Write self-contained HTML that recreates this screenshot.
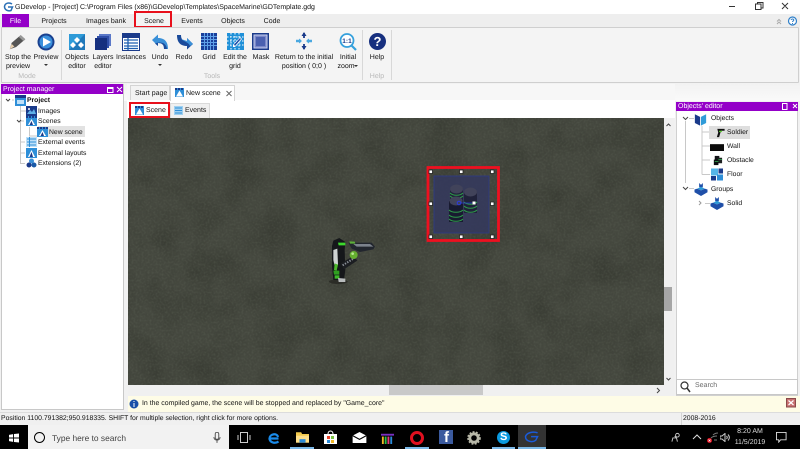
<!DOCTYPE html>
<html style="background:#f1f1f1"><head><meta charset="utf-8">
<style>
html,body{margin:0;padding:0;width:800px;height:449px;overflow:hidden;background:#f1f1f1;font-family:"Liberation Sans",sans-serif;font-size:7px;color:#111;text-rendering:geometricPrecision}
body{filter:blur(.25px)}
div,span,svg{position:absolute;box-sizing:border-box}
.t{white-space:nowrap;line-height:10px}
.c{text-align:center;transform:translateX(-50%);line-height:9px;white-space:nowrap;color:#111;font-size:7px}
.tree{font-size:6.8px;line-height:10px;white-space:nowrap;color:#111}
</style></head>
<body>
<!-- title bar -->
<div style="left:0;top:0;width:800px;height:14px;background:#fff"></div>
<svg style="left:3px;top:2px" width="11" height="10" viewBox="0 0 11 10"><path d="M9 2C6 0 2 1 1.500 4.500C1.500 8 5 9.500 8 8.500L9.500 5H5" fill="none" stroke="#2a6fb5" stroke-width="1.500"/></svg>
<div class="t" style="left:15px;top:3px;font-size:7px;color:#111">GDevelop - [Project] C:\Program Files (x86)\GDevelop\Templates\SpaceMarine\GDTemplate.gdg</div>
<svg style="left:725px;top:0" width="75" height="14" viewBox="0 0 75 14"><path d="M4 6.500H10M30.500 4H36V9.500H30.500ZM32.500 4V2.500H38V8H36M57 3L63 9M63 3L57 9" fill="none" stroke="#333" stroke-width="1"/></svg>
<!-- tabs row -->
<div style="left:0;top:14px;width:800px;height:14px;background:#eeeeee"></div>
<div style="left:2px;top:14px;width:27px;height:14px;background:#9400c8;color:#fff;text-align:center;line-height:15px;font-size:7px">File</div>
<div class="c" style="left:54px;top:17px">Projects</div>
<div class="c" style="left:106px;top:17px">Images bank</div>
<div style="left:134px;top:11px;width:38px;height:17px;border:2px solid #e8101c;background:#f4f4f4"></div>
<div class="c" style="left:154px;top:17px">Scene</div>
<div class="c" style="left:192px;top:17px">Events</div>
<div class="c" style="left:233px;top:17px">Objects</div>
<div class="c" style="left:272px;top:17px">Code</div>
<svg style="left:776px;top:15px" width="22" height="12" viewBox="0 0 22 12"><path d="M1 6.500L3 4.500L5 6.500M1 9L3 7L5 9" fill="none" stroke="#aaa"/><circle cx="16.500" cy="6" r="4" fill="#fff" stroke="#2f7fc8" stroke-width="1.200"/><path d="M15 5C15.500 3.500 18 3.800 17.800 5.300C17.600 6 16.500 6 16.500 7M16.500 8V9" fill="none" stroke="#2f7fc8"/></svg>
<!-- ribbon -->
<div style="left:1px;top:27px;width:798px;height:56px;background:#f4f4f4;border:1px solid #cfcfcf;border-radius:1px"></div>
<div style="left:61px;top:30px;width:1px;height:50px;background:#d8d8d8"></div>
<div style="left:362px;top:30px;width:1px;height:50px;background:#d8d8d8"></div>
<div style="left:391px;top:30px;width:1px;height:50px;background:#d8d8d8"></div>

<!-- ribbon icons -->
<svg style="left:8px;top:33px" width="20" height="18" viewBox="0 0 22 18"><path d="M2 17L4 10L14 1.500L19 6L9 14.500Z" fill="#555"/><path d="M14 1.500L19 6L17 8L12 3.500Z" fill="#999"/><path d="M2 17L4 11L7 14Z" fill="#e8d0b0"/></svg>
<svg style="left:36px;top:33px" width="20" height="18" viewBox="0 0 20 18"><circle cx="10" cy="9" r="8.500" fill="#19408f"/><circle cx="10" cy="9" r="6.500" fill="#3a90dc"/><path d="M7 4.500L15 9L7 13.500Z" fill="#fff"/></svg>
<svg style="left:68px;top:33px" width="18" height="18" viewBox="0 0 18 18"><rect x="1" y="1" width="16" height="16" fill="#2f9bd8"/><path d="M17 1V17H1Z" fill="#1f78ba"/><path d="M9 4L12 7L9 10L6 7ZM5 9L8 12L5 15L2 12ZM13 9L16 12L13 15L10 12Z" fill="#fff"/></svg>
<svg style="left:94px;top:33px" width="18" height="18" viewBox="0 0 18 18"><rect x="5" y="1" width="12" height="12" fill="#5b78c8"/><rect x="3" y="3" width="12" height="12" fill="#2f4ea8"/><rect x="1" y="5" width="12" height="12" fill="#16307f"/></svg>
<svg style="left:122px;top:33px" width="18" height="18" viewBox="0 0 18 18"><rect x=".5" y=".5" width="17" height="17" fill="#fff" stroke="#1a3a8a"/><rect x="1" y="1" width="16" height="4" fill="#1a3a8a"/><path d="M2 7H16M2 10H16M2 13H16M2 15.500H16M6 5V17" stroke="#1f5fb0" stroke-width="1.300" fill="none"/></svg>
<svg style="left:151px;top:33px" width="18" height="18" viewBox="0 0 18 18"><path d="M1 7L7 1.500V5C13 5 17 8 17 16H13C13 11.500 11 10 7 10V13Z" fill="#3a90d8"/><path d="M13 16C13 11.500 11 10 7 10V13L4 10.500C9 8.500 15 9 16 16Z" fill="#1a4a9a"/></svg>
<svg style="left:176px;top:33px" width="18" height="18" viewBox="0 0 18 18"><path d="M17 11L11 16.500V13C5 13 1 10 1 2H5C5 6.500 7 8 11 8V5Z" fill="#1a4a9a"/><path d="M11 8V5L17 11L14 13C13 9.500 8 8.500 5 6Z" fill="#3a90d8"/></svg>
<svg style="left:201px;top:33px" width="16" height="17" viewBox="0 0 16 17"><rect width="16" height="17" fill="#1a3f9a"/><path d="M3.500 0V17M6.500 0V17M9.500 0V17M12.500 0V17M0 3.500H16M0 6.500H16M0 9.500H16M0 12.500H16" stroke="#5fa0e8" stroke-width="1"/></svg>
<svg style="left:227px;top:33px" width="17" height="17" viewBox="0 0 17 17"><rect width="17" height="17" fill="#1f90d8"/><path d="M0 4H17M0 8H17M0 12H17M4 0V17M8 0V17M12 0V17" stroke="#fff" stroke-dasharray="1.500 1.500"/><path d="M6 12L13 4L15 6L8 14H6Z" fill="#fff"/><path d="M7 11.500L13 5L14 6L8 13Z" fill="#1f4fa8"/></svg>
<svg style="left:252px;top:33px" width="17" height="17" viewBox="0 0 17 17"><rect width="17" height="17" fill="#1a3a8a"/><rect x="2" y="2" width="13" height="13" fill="#7a88c8" stroke="#c8d0f0"/><rect x="4" y="4" width="9" height="9" fill="#4a60b0"/></svg>
<svg style="left:295px;top:32px" width="18" height="18" viewBox="0 0 18 18"><path d="M9 1V6M9 12V17" stroke="#1a3a8a" stroke-width="1.800"/><path d="M9 0L11.500 4H6.500ZM9 18L11.500 14H6.500Z" fill="#1a3a8a"/><path d="M1 9H6M12 9H17" stroke="#4aa8e0" stroke-width="2.500"/><path d="M7 9L4 6.500V11.500ZM11 9L14 6.500V11.500Z" fill="#4aa8e0"/></svg>
<svg style="left:339px;top:33px" width="18" height="18" viewBox="0 0 18 18"><circle cx="8" cy="7.500" r="6.500" fill="#fff" stroke="#35a0dc" stroke-width="1.800"/><path d="M12.500 12.500L17 17" stroke="#35a0dc" stroke-width="2.200"/><text x="8" y="10" font-size="6.500" font-weight="bold" text-anchor="middle" fill="#1a3a8a" font-family="Liberation Sans">1:1</text></svg>
<svg style="left:369px;top:33px" width="17" height="17" viewBox="0 0 17 17"><circle cx="8.500" cy="8.500" r="8.500" fill="#17307f"/><text x="8.500" y="13" font-size="13" font-weight="bold" text-anchor="middle" fill="#fff" font-family="Liberation Sans">?</text></svg>

<!-- ribbon labels -->
<div class="c" style="left:18px;top:53px">Stop the</div><div class="c" style="left:18px;top:62px">preview</div>
<div class="c" style="left:46px;top:53px">Preview</div>
<div style="left:44px;top:64px;border:2px solid transparent;border-top:2px solid #333"></div>
<div class="c" style="left:77px;top:53px">Objects</div><div class="c" style="left:77px;top:62px">editor</div>
<div class="c" style="left:103px;top:53px">Layers</div><div class="c" style="left:103px;top:62px">editor</div>
<div class="c" style="left:131px;top:53px">Instances</div>
<div class="c" style="left:160px;top:53px">Undo</div>
<div style="left:158px;top:64px;border:2px solid transparent;border-top:2px solid #333"></div>
<div class="c" style="left:184px;top:53px">Redo</div>
<div class="c" style="left:209px;top:53px">Grid</div>
<div class="c" style="left:235px;top:53px">Edit the</div><div class="c" style="left:235px;top:62px">grid</div>
<div class="c" style="left:261px;top:53px">Mask</div>
<div class="c" style="left:304px;top:53px">Return to the initial</div><div class="c" style="left:304px;top:62px">position ( 0;0 )</div>
<div class="c" style="left:348px;top:53px">Initial</div><div class="c" style="left:346px;top:62px">zoom</div>
<div style="left:354px;top:65px;border:2px solid transparent;border-top:2px solid #333"></div>
<div class="c" style="left:377px;top:53px">Help</div>
<div class="c" style="left:27px;top:72px;color:#b8b8b8">Mode</div>
<div class="c" style="left:212px;top:72px;color:#b8b8b8">Tools</div>
<div class="c" style="left:377px;top:72px;color:#b8b8b8">Help</div>

<!-- band under ribbon -->
<div style="left:0;top:83px;width:800px;height:18px;background:linear-gradient(#f2f2f2,#fafafa)"></div>
<div style="left:127px;top:100px;width:548px;height:18px;background:#fff"></div>

<!-- Project manager -->
<div style="left:1px;top:84px;width:123px;height:326px;background:#fff;border:1px solid #c8c8c8"></div>
<div style="left:1px;top:84px;width:122px;height:10px;background:#9400c8"></div>
<div class="t" style="left:3px;top:85px;color:#fff;font-size:7px;line-height:10px">Project manager</div>
<svg style="left:105px;top:85px" width="18" height="9" viewBox="0 0 18 9"><path d="M2.500 2.500H8V7.500H2.500ZM2.500 3.500H8M12 2L17 7M17 2L12 7" fill="none" stroke="#fff"/></svg>
<!-- tree lines -->
<svg style="left:0;top:94px" width="124" height="80" viewBox="0 0 124 80"><path d="M12 6H14M20.500 12V70M20.500 17H26M20.500 27H24M29.500 33V42H37M20.500 48H25M20.500 59H25M20.500 69.500H25" fill="none" stroke="#c8c8c8" stroke-width="1"/><path d="M6 5L8 7L10 5M17 26L19 28L21 26" fill="none" stroke="#444"/></svg>
<div style="left:38px;top:126px;width:47px;height:11px;background:#e2e2e2"></div>
<svg style="left:14px;top:95px" width="13" height="11" viewBox="0 0 13 11"><rect x="1" y="0" width="11" height="11" fill="#2f8fd8"/><rect x="1" y="0" width="11" height="3" fill="#1a3a8a"/><rect x="3" y="5" width="7" height="4" fill="#bfe0f8"/></svg>
<svg style="left:26px;top:106px" width="11" height="10" viewBox="0 0 11 10"><rect width="11" height="10" fill="#1a3a8a"/><path d="M1 8L4 4L6 6L8 3L10 8Z" fill="#5fb0e8"/><circle cx="3" cy="3" r="1" fill="#fff"/></svg>
<svg style="left:26px;top:116px" width="11" height="10" viewBox="0 0 11 10"><rect width="11" height="10" fill="#2f8fd8"/><path d="M0 1H11" stroke="#1a3a8a" stroke-width="2" stroke-dasharray="2 1"/><path d="M5.500 3L9 9H2Z" fill="#fff"/><path d="M5.500 5L7 9H3.500Z" fill="#1a3a8a"/></svg>
<svg style="left:37px;top:127px" width="11" height="10" viewBox="0 0 11 10"><rect width="11" height="10" fill="#2f8fd8"/><path d="M0 1H11" stroke="#1a3a8a" stroke-width="2" stroke-dasharray="2 1"/><path d="M5.500 3L9 9H2Z" fill="#fff"/><path d="M5.500 5L7 9H3.500Z" fill="#1a3a8a"/></svg>
<svg style="left:26px;top:137px" width="11" height="10" viewBox="0 0 11 10"><rect width="11" height="10" fill="#bfe0f8"/><path d="M1 2H10M1 5H10M1 8H10M3.500 0V10" stroke="#2f8fd8"/></svg>
<svg style="left:26px;top:148px" width="11" height="10" viewBox="0 0 11 10"><rect width="11" height="10" fill="#2f8fd8"/><path d="M5.500 2L9 9H2Z" fill="#fff"/><path d="M5.500 4L7 9H3.500Z" fill="#1a3a8a"/></svg>
<svg style="left:26px;top:158px" width="11" height="10" viewBox="0 0 11 10"><circle cx="5.500" cy="3" r="2.500" fill="#3a90d8"/><circle cx="3" cy="7" r="2.500" fill="#1a3a8a"/><circle cx="8" cy="7" r="2.500" fill="#1a5aa8"/></svg>
<div class="tree" style="left:27px;top:96px;font-weight:bold">Project</div>
<div class="tree" style="left:38px;top:107px">Images</div>
<div class="tree" style="left:38px;top:117px">Scenes</div>
<div class="tree" style="left:49px;top:128px">New scene</div>
<div class="tree" style="left:38px;top:138px">External events</div>
<div class="tree" style="left:38px;top:149px">External layouts</div>
<div class="tree" style="left:38px;top:159px">Extensions (2)</div>

<!-- scene tabs -->
<div style="left:127px;top:84px;width:548px;height:16px;background:#f7f7f7"></div>
<div style="left:130px;top:85px;width:40px;height:15px;background:#f3f3f3;border:1px solid #d4d4d4;border-bottom:0"></div>
<div class="t" style="left:135px;top:89px;font-size:7px">Start page</div>
<div style="left:170px;top:85px;width:65px;height:16px;background:#fff;border:1px solid #d4d4d4;border-bottom:0"></div>
<svg style="left:175px;top:88px" width="9" height="9" viewBox="0 0 9 9"><rect width="9" height="9" fill="#2f8fd8"/><path d="M0 1H9" stroke="#1a3a8a" stroke-width="2" stroke-dasharray="2 1"/><path d="M4.500 2.500L8 8.500H1Z" fill="#fff"/></svg>
<div class="t" style="left:186px;top:89px;font-size:7px">New scene</div>
<svg style="left:225px;top:90px" width="8" height="7" viewBox="0 0 8 7"><path d="M1.500 1L6.500 6M6.500 1L1.500 6" stroke="#666" fill="none"/></svg>

<div style="left:170px;top:103px;width:40px;height:15px;background:#f0f0f0;border:1px solid #dadada;border-bottom:0"></div>
<svg style="left:174px;top:106px" width="9" height="9" viewBox="0 0 9 9"><rect width="9" height="9" fill="#9fd0f0"/><path d="M1 2H8M1 4.500H8M1 7H8" stroke="#2f8fd8"/></svg>
<div class="t" style="left:185px;top:106px;font-size:7px">Events</div>
<div style="left:129px;top:102px;width:41px;height:16px;background:#fff;border:2px solid #e8101c"></div>
<svg style="left:135px;top:106px" width="9" height="9" viewBox="0 0 9 9"><rect width="9" height="9" fill="#2f8fd8"/><path d="M0 1H9" stroke="#1a3a8a" stroke-width="2" stroke-dasharray="2 1"/><path d="M4.500 2.500L8 8.500H1Z" fill="#fff"/></svg>
<div class="t" style="left:146px;top:106px;font-size:7px">Scene</div>

<!-- canvas -->
<svg style="left:128px;top:118px" width="536" height="267" viewBox="0 0 536 267">
<defs>
<filter id="n" x="0" y="0" width="100%" height="100%" color-interpolation-filters="sRGB"><feTurbulence type="fractalNoise" baseFrequency="0.03" numOctaves="4" seed="4"/><feColorMatrix type="matrix" values="0 0 0 0 0.18  0 0 0 0 0.19  0 0 0 0 0.16  2 0 0 0 -0.75"/></filter>
<filter id="m" x="0" y="0" width="100%" height="100%" color-interpolation-filters="sRGB"><feTurbulence type="fractalNoise" baseFrequency="0.5" numOctaves="2" seed="8"/><feColorMatrix type="matrix" values="0 0 0 0 0.42  0 0 0 0 0.45  0 0 0 0 0.39  1.4 0 0 0 -0.55"/></filter>
</defs>
<rect width="536" height="267" fill="#44473e"/>
<rect width="536" height="267" filter="url(#n)" opacity=".45"/>
<rect width="536" height="267" filter="url(#m)" opacity=".4"/>
</svg>

<!-- soldier -->
<svg style="left:320px;top:230px" width="60" height="60" viewBox="0 0 180 180">
<ellipse cx="55" cy="155" rx="28" ry="7" fill="#23241f" opacity=".7"/>
<path d="M36 48L40 32L58 24L76 36L74 60L76 120L72 150L40 150L36 110Z" fill="#15171a"/>
<path d="M40 60L52 56L54 104L44 108L40 90Z" fill="#cfd3d3"/>
<path d="M54 38H76V46H56Z" fill="#3cd92c"/>
<path d="M44 100L54 104L50 122L42 120Z" fill="#4cb82c"/>
<path d="M85 38L155 38L165 50L160 58L120 66L95 56Z" fill="#22262e"/>
<path d="M100 42H150L160 50L110 50Z" fill="#7c828c"/>
<path d="M88 34L104 35L106 41L90 41Z" fill="#5cb038"/>
<path d="M62 100L100 78L112 92L72 118Z" fill="#1c1e22"/>
<path d="M68 106L100 86" stroke="#8a9098" stroke-width="6" stroke-dasharray="4 4"/>
<circle cx="101" cy="75" r="12" fill="#66b030"/><circle cx="98" cy="71" r="4" fill="#b8e890"/>
<path d="M40 122H58V134H42Z" fill="#2f9f20"/>
<path d="M44 136H58V146H44Z" fill="#3cba28"/>
<path d="M54 144L76 146L76 156L56 156Z" fill="#b8bcbc"/>
</svg>

<!-- barrels -->
<div style="left:434px;top:176px;width:55px;height:57px;background:#34385e;opacity:.85"></div>
<svg style="left:420px;top:160px" width="85" height="85" viewBox="0 0 85 85">
<rect x="14" y="16" width="55" height="57" fill="none" stroke="#2f3a88" stroke-width=".8"/>
<rect x="30" y="28" width="13" height="20" fill="#20223a"/><ellipse cx="36.500" cy="29" rx="6.500" ry="4.500" fill="#41435a"/>
<path d="M30 33C33 36 40 36 43 33M30 36C33 39 40 39 43 36" stroke="#2e9a4a" fill="none" stroke-width="1.100"/>
<rect x="44" y="31" width="13" height="22" fill="#20223a"/><ellipse cx="50.500" cy="32" rx="6.500" ry="4.500" fill="#41435a"/>
<path d="M44 42C47 45 54 45 57 42M44 46C47 49 54 49 57 46M44 50C47 53 54 53 57 50" stroke="#2e9a4a" fill="none" stroke-width="1.100"/>
<rect x="29" y="41" width="14" height="21" fill="#181a30"/><ellipse cx="36" cy="41" rx="6.500" ry="4.500" fill="#41435a"/>
<path d="M29 50C32 53 40 53 43 50M29 55C32 58 40 58 43 55M29 59C32 62 40 62 43 59" stroke="#2e9a4a" fill="none" stroke-width="1.100"/>
<circle cx="39" cy="43" r="1.800" fill="none" stroke="#2a3ae0"/>
<rect x="52.500" y="41.500" width="3" height="3" fill="#fff"/>
<path d="M41 43H52" stroke="#2a3ae0" stroke-width=".7"/>
<rect x="8" y="7.500" width="70.500" height="73" fill="none" stroke="#ee1020" stroke-width="2.800"/>
<g fill="#fff" stroke="#222" stroke-width=".8">
<rect x="9" y="10" width="3.500" height="3.500"/><rect x="39.500" y="10" width="3.500" height="3.500"/><rect x="70.500" y="10" width="3.500" height="3.500"/>
<rect x="9" y="42" width="3.500" height="3.500"/><rect x="70.500" y="42" width="3.500" height="3.500"/>
<rect x="9" y="75" width="3.500" height="3.500"/><rect x="39.500" y="75" width="3.500" height="3.500"/><rect x="70.500" y="75" width="3.500" height="3.500"/>
</g></svg>

<!-- scrollbars -->
<div style="left:664px;top:118px;width:10px;height:278px;background:#f0f0f0"></div>
<div style="left:664px;top:287px;width:8px;height:24px;background:#a6a6a6"></div>
<svg style="left:664px;top:120px" width="10" height="270" viewBox="0 0 10 270"><path d="M2.500 6L4.500 4L6.500 6M2.500 258L4.500 260L6.500 258" stroke="#444" fill="none"/></svg>
<div style="left:128px;top:385px;width:536px;height:11px;background:#f0f0f0"></div>
<div style="left:389px;top:385px;width:94px;height:10px;background:#c9c9c9"></div>
<svg style="left:654px;top:386px" width="9" height="9" viewBox="0 0 9 9"><path d="M3 2L5.500 4.500L3 7" stroke="#444" fill="none"/></svg>

<!-- Objects editor -->
<div style="left:676px;top:102px;width:122px;height:294px;background:#fff;border:1px solid #d0d0d0"></div>
<div style="left:676px;top:102px;width:122px;height:9px;background:#9400c8"></div>
<div class="t" style="left:678px;top:102px;color:#fff;font-size:7px;line-height:10px">Objects' editor</div>
<svg style="left:780px;top:102px" width="18" height="9" viewBox="0 0 18 9"><path d="M2.500 1.500H7V7.500H2.500ZM13 2L17 6M17 2L13 6" fill="none" stroke="#fff"/></svg>
<svg style="left:680px;top:112px" width="60" height="110" viewBox="0 0 60 110"><path d="M5.500 9V71M9 6.500H14M22 14V62.500M22 20H30M22 34H30M22 48H30M22 62.500H30M9 76.500H14M25 91.500H30" stroke="#c8c8c8" fill="none"/><path d="M3 5L5.500 7.500L8 5M3 75L5.500 77.500L8 75" stroke="#444" fill="none"/><path d="M19 89L21 91L19 93" stroke="#999" fill="none"/></svg>
<div style="left:709px;top:126px;width:41px;height:13px;background:#dedede"></div>
<svg style="left:694px;top:113px" width="13" height="13" viewBox="0 0 15 14"><path d="M1 1L7 4V14L1 11Z" fill="#1a3a8a"/><path d="M14 1L8 4V14L14 11Z" fill="#2f9bd8"/></svg>
<svg style="left:715px;top:128px" width="11" height="10" viewBox="0 0 11 11"><path d="M2 1H10V3H6L4 10H1.500L3 5Z" fill="#111"/><path d="M4 3H7V4.500H4Z" fill="#5ad030"/></svg>
<div style="left:710px;top:144px;width:14px;height:7px;background:#0c0c0c;border-top:1px solid #333"></div>
<svg style="left:712px;top:155px" width="11" height="11" viewBox="0 0 12 12"><rect x="3" y="1" width="5" height="6" fill="#121418"/><rect x="6" y="3" width="5" height="6" fill="#1c2020"/><rect x="2" y="5" width="5" height="6" fill="#0c0e10"/><path d="M3 7H7M7 5H11" stroke="#2e9a4a"/></svg>
<svg style="left:711px;top:168px" width="12" height="13" viewBox="0 0 12 12"><rect width="7" height="7" fill="#55b5e8"/><rect x="7.500" y="0" width="4.500" height="5" fill="#1a3a8a"/><rect x="0" y="7.500" width="5" height="4.500" fill="#1a3a8a"/><rect x="6" y="6" width="6" height="6" fill="#2f8fd8"/></svg>
<svg style="left:694px;top:183px" width="14" height="13" viewBox="0 0 14 14"><path d="M7 2L9 0V4L7 6L5 4V0ZM3 6L7 8V14L0 10V7ZM11 6L7 8V14L14 10V7Z" fill="#1f4fa8"/><path d="M3 6L7 8L11 6L7 4Z" fill="#2f9bd8"/></svg>
<svg style="left:710px;top:197px" width="14" height="13" viewBox="0 0 14 14"><path d="M7 2L9 0V4L7 6L5 4V0ZM3 6L7 8V14L0 10V7ZM11 6L7 8V14L14 10V7Z" fill="#1f4fa8"/><path d="M3 6L7 8L11 6L7 4Z" fill="#2f9bd8"/></svg>
<div class="tree" style="left:711px;top:114px">Objects</div>
<div class="tree" style="left:727px;top:128px">Soldier</div>
<div class="tree" style="left:727px;top:142px">Wall</div>
<div class="tree" style="left:727px;top:156px">Obstacle</div>
<div class="tree" style="left:727px;top:170px">Floor</div>
<div class="tree" style="left:711px;top:185px">Groups</div>
<div class="tree" style="left:727px;top:199px">Solid</div>
<!-- search -->
<div style="left:676px;top:379px;width:122px;height:16px;background:#fff;border:1px solid #c8c8c8"></div>
<svg style="left:680px;top:381px" width="11" height="12" viewBox="0 0 11 12"><circle cx="4.500" cy="4.500" r="3.500" fill="none" stroke="#333" stroke-width="1.200"/><path d="M7 7L10 11" stroke="#333" stroke-width="1.500"/></svg>
<div class="t" style="left:695px;top:381px;font-size:7px;color:#666">Search</div>

<!-- info bar -->
<div style="left:128px;top:396px;width:672px;height:16px;background:#fefce6"></div>
<svg style="left:129px;top:399px" width="10" height="10" viewBox="0 0 10 10"><circle cx="5" cy="5" r="4.500" fill="#1a50a8"/><path d="M5 2V3M5 4V8" stroke="#fff"/></svg>
<div class="t" style="left:142px;top:399px;font-size:6.950px;color:#111">In the compiled game, the scene will be stopped and replaced by "Game_core"</div>
<svg style="left:786px;top:398px" width="11" height="10" viewBox="0 0 11 10"><rect x=".5" y=".5" width="9" height="8.500" fill="#c87070" stroke="#8a4a4a"/><path d="M2.500 2.500L7.500 7M7.500 2.500L2.500 7" stroke="#fff" stroke-width="1.200"/></svg>

<!-- status bar -->
<div style="left:0;top:412px;width:800px;height:13px;background:#f0f0f0;border-top:1px solid #dcdcdc"></div>
<div class="t" style="left:1px;top:414px;font-size:6.850px;color:#111">Position 1100.791382;950.918335. SHIFT for multiple selection, right click for more options.</div>
<div style="left:681px;top:413px;width:1px;height:12px;background:#d4d4d4"></div>
<div class="t" style="left:683px;top:414px;font-size:6.850px;color:#111">2008-2016</div>

<!-- taskbar -->
<div style="left:0;top:425px;width:800px;height:24px;background:#000"></div>
<svg style="left:9px;top:433px" width="10" height="10" viewBox="0 0 11 10"><path d="M0 1.500L4.500 .8V4.500H0ZM5.500 .6L11 0V4.500H5.500ZM0 5.500H4.500V9.200L0 8.500ZM5.500 5.500H11V10L5.500 9.400Z" fill="#fff"/></svg>
<div style="left:28px;top:425px;width:201px;height:24px;background:#f2f2f2"></div>
<div style="left:34px;top:432px;width:11px;height:11px;border:1.800px solid #000;border-radius:50%"></div>
<div class="t" style="left:52px;top:433px;font-size:8.400px;color:#444">Type here to search</div>
<svg style="left:213px;top:432px" width="8" height="12" viewBox="0 0 9 13"><rect x="2.500" y="0" width="4" height="8" rx="2" fill="none" stroke="#444"/><path d="M1 5.500C1 10 8 10 8 5.500M4.500 9V12" fill="none" stroke="#444"/></svg>
<svg style="left:237px;top:432px" width="14" height="12" viewBox="0 0 14 12"><rect x="3.500" y=".5" width="7" height="10" fill="none" stroke="#ccc"/><path d="M1 3V8M13 3V8" stroke="#ccc"/></svg>
<svg style="left:267px;top:431px" width="13" height="14" viewBox="0 0 13 14"><path d="M11.500 7.500H2.500C2.500 3 10 1.500 11 6M11.500 10.500C8.500 12.800 3 12 2.500 7.500" fill="none" stroke="#1a8ae8" stroke-width="2.200"/></svg>
<svg style="left:296px;top:431px" width="13" height="12" viewBox="0 0 15 13"><path d="M0 1H6L7 3H15V13H0Z" fill="#f2c94c"/><rect x="0" y="5" width="15" height="8" fill="#ffe08a"/><rect x="4" y="9" width="7" height="4" fill="#2a8ad8"/></svg>
<div style="left:290px;top:447px;width:24px;height:2px;background:#7ab8e8"></div>
<svg style="left:324px;top:430px" width="13" height="14" viewBox="0 0 13 14"><path d="M0 4H13V14H0Z" fill="#fff"/><path d="M4 4C4 0 9 0 9 4" fill="none" stroke="#fff"/><rect x="3" y="6" width="3" height="3" fill="#e8432a"/><rect x="7" y="6" width="3" height="3" fill="#7ac142"/><rect x="3" y="10" width="3" height="3" fill="#2a8ad8"/><rect x="7" y="10" width="3" height="3" fill="#f2b824"/></svg>
<svg style="left:352px;top:432px" width="15" height="11" viewBox="0 0 15 12"><path d="M0 4L7.500 0L15 4V12H0Z" fill="#fff"/><path d="M0 4L7.500 8L15 4" fill="none" stroke="#000" stroke-width="1.200"/></svg>
<svg style="left:381px;top:431px" width="13" height="13" viewBox="0 0 14 14"><rect x="0" y="3" width="14" height="2" fill="#7a30c0"/><rect x="1" y="6" width="2" height="8" fill="#f2b824"/><rect x="4" y="6" width="2" height="8" fill="#2ac04a"/><rect x="7" y="6" width="2" height="8" fill="#e83a7a"/><rect x="10" y="6" width="2" height="8" fill="#2a8ad8"/></svg>
<div style="left:405px;top:447px;width:24px;height:2px;background:#7ab8e8"></div>
<div style="left:410px;top:431px;width:14px;height:14px;border:3.500px solid #e01020;border-radius:50%"></div>
<div style="left:439px;top:430px;width:14px;height:14px;background:#3b5a9e"></div>
<div class="t" style="left:444px;top:431px;font-size:15px;line-height:14px;font-weight:bold;color:#fff">f</div>
<svg style="left:467px;top:431px" width="14" height="14" viewBox="0 0 15 15"><circle cx="7.500" cy="7.500" r="4.500" fill="none" stroke="#b8b8a8" stroke-width="3"/><circle cx="7.500" cy="7.500" r="6.300" fill="none" stroke="#b8b8a8" stroke-width="2" stroke-dasharray="2 1.500"/></svg>
<div style="left:497px;top:431px;width:13px;height:13px;background:#0a9ae0;border-radius:50%"></div>
<div class="t" style="left:500px;top:432px;font-size:11px;line-height:11px;font-weight:bold;color:#fff">S</div>
<div style="left:492px;top:447px;width:23px;height:2px;background:#7ab8e8"></div>
<div style="left:518px;top:425px;width:28px;height:24px;background:#333"></div>
<div style="left:518px;top:447px;width:28px;height:2px;background:#7ab8e8"></div>
<svg style="left:524px;top:431px" width="16" height="13" viewBox="0 0 16 14"><path d="M14 2C9 0 2 2 1 6C1 11 8 13 12 10L14 6H7" fill="none" stroke="#1a5ad8" stroke-width="1.600"/></svg>
<svg style="left:671px;top:432px" width="11" height="11" viewBox="0 0 12 11"><circle cx="7" cy="3" r="2" fill="none" stroke="#ccc"/><path d="M1 10L2 6H6L7 10M4 4L6 6" fill="none" stroke="#ccc"/></svg>
<svg style="left:692px;top:434px" width="10" height="6" viewBox="0 0 10 6"><path d="M1 5L5 1L9 5" fill="none" stroke="#ddd"/></svg>
<svg style="left:706px;top:432px" width="12" height="12" viewBox="0 0 12 12"><path d="M5 6C6 5 8 4 11 4M7 3C8 2 10 1 12 1M8 8H11" stroke="#777" fill="none"/><circle cx="3.500" cy="8.500" r="2.500" fill="#e01020"/><path d="M2.500 7.500L4.500 9.500M4.500 7.500L2.500 9.500" stroke="#fff" stroke-width=".7"/></svg>
<svg style="left:720px;top:433px" width="10" height="9" viewBox="0 0 10 9"><path d="M0 3H2L5 .5V8.500L2 6H0Z" fill="none" stroke="#ccc"/><path d="M6.500 3C7.500 4 7.500 5 6.500 6M8 1.500C9.800 3.500 9.800 5.500 8 7.500" fill="none" stroke="#ccc"/></svg>
<div class="t" style="left:730px;top:427px;font-size:7px;width:40px;color:#ddd;text-align:center">8:20 AM</div>
<div class="t" style="left:730px;top:438px;font-size:7px;width:40px;color:#ddd;text-align:center">11/5/2019</div>
<svg style="left:776px;top:432px" width="11" height="11" viewBox="0 0 12 12"><path d="M.5 .5H11V8.500H5L3 11V8.500H.5Z" fill="none" stroke="#ddd"/></svg>
</body></html>
